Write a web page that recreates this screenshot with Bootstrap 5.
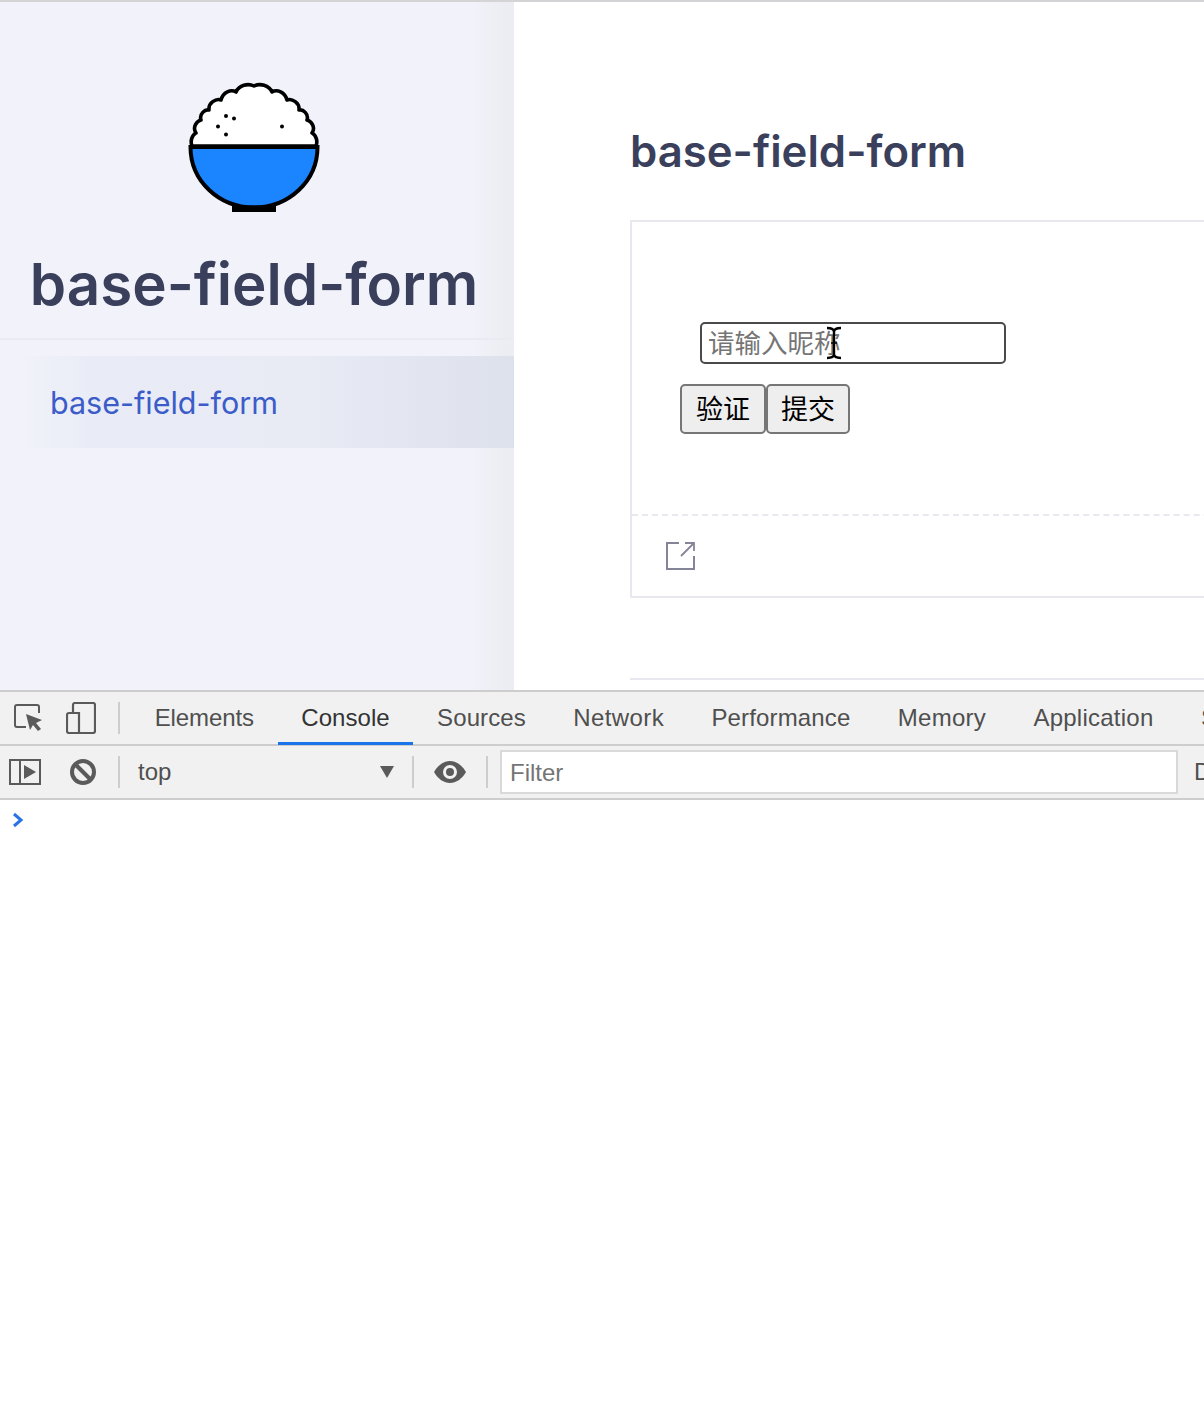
<!DOCTYPE html>
<html lang="zh">
<head>
<meta charset="utf-8">
<title>base-field-form</title>
<link href="https://cdn.jsdelivr.net/npm/bootstrap@5.3.0/dist/css/bootstrap.min.css" rel="stylesheet">
<style>
html,body{height:100%;overflow:hidden;background:#fff}
body{width:1204px;height:1406px;font-family:Inter,"Noto Sans CJK SC",sans-serif}
.page-top{height:690px;border-top:2px solid #d4d4d6}
.side-pane{width:514px;background:linear-gradient(90deg,#f1f2fa 0,#f1f2fa 92.500%,#eef0f6 95%,#ebedf3 99%,#eceef4 100%);color:#3a405c}
.side-head{height:338px;border-bottom:2px solid #e9ebf3;padding:80px 6px 0 0}
.side-title{font-size:58.3px;font-weight:600;line-height:72px;margin:36px 0 0}
.side-link{margin-top:16px;height:92px;padding:2px 0 0 50px;font-size:30.5px;color:#3b5cc9;background:linear-gradient(90deg,#f1f2fa 0,#f1f2fa 4%,#e9ecf6 18%,#e8ebf4 60%,#dde1ec 100%)}
.main-pane{padding:118px 0 0 116px;min-width:0}
.main-title{font-size:43.7px;font-weight:600;color:#3a405c;line-height:64px;margin:0 0 36px;white-space:nowrap}
.demo-box{width:700px;height:378px;border:2px solid #e8e8ee;border-right:0}
.demo-area{height:294px;padding:100px 0 0 48px;border-bottom:2px dashed #e8e8ee}
.demo-input{display:block;width:306px;height:42px;margin-left:20px;padding:0 6px 4px;border:2px solid #4a4a4a;border-radius:5px;font:26.500px "Noto Sans CJK SC",sans-serif;outline:0}
.demo-input::placeholder{color:#757575;opacity:1}
.demo-btns{margin-top:20px}
.demo-btn{width:86px;height:50px;padding:0 0 4px;background:#eee;border:2px solid #767676;border-radius:5px;font:27px "Noto Sans CJK SC",sans-serif;color:#000}
.demo-btn+.demo-btn{width:84px}
.demo-foot{padding:25px 0 0 34px}
.page-rule{width:700px;height:2px;background:#e8e8ee;margin-top:80px}
.ibeam{position:absolute;left:824px;top:326px;pointer-events:none}
.dev-font{font-family:"Liberation Sans",Arial,sans-serif;font-size:24px;color:#4f4f4f}
.dev-bar{background:#f1f1f1;border-top:2px solid #cdcdcd}
.dev-tabs{height:56px;padding-left:14px}
.dev-tools{height:54px;padding-left:9px}
.dev-sep{width:2px;height:32px;background:#cdcdcd;flex:none}
.dev-tab{padding:0 23.7px;height:54px;line-height:54px;flex:none;white-space:nowrap;letter-spacing:.25px}
.dev-tab-first{letter-spacing:-.1px}
.dev-tab-on{color:#333;border-bottom:3px solid #1a73e8;letter-spacing:.05px}
.dev-tab-src{letter-spacing:.1px}
.dev-tab-net{letter-spacing:.4px}
.dev-tab-perf{letter-spacing:.15px}
.dev-line{border-bottom:2px solid #cdcdcd}
.filter-box{width:678px;height:44px;background:#fff;border:2px solid #d9d9d9;padding-left:8px;line-height:42px;color:#757575;flex:none}
.ctx-select{width:292px;padding-left:18px;flex:none}
.console-pane{height:606px;padding:12px 0 0 12px}
.gap-device{margin-left:22px}
.gap-sep-a{margin-left:22px;margin-right:11px}
.gap-ban{margin-left:28px}
.gap-sep-b{margin-left:21px}
.gap-eye{margin-left:20px}
.gap-sep-c{margin-left:20px;margin-right:12px}
.gap-arrow{margin-right:18px}
.gap-end{margin-left:16px}
</style>
</head>
<body class="position-relative">
<div class="page-top d-flex overflow-hidden">
  <aside class="side-pane flex-shrink-0">
    <div class="side-head text-center">
      <svg width="132" height="130" viewBox="188 82 132 130" class="d-block mx-auto" aria-hidden="true">
        <path d="M192 146C190 141 192 135 196 133C192 127 197 121 201 120C199 114 205 109 209 110C208 103 216 98 221 100C223 92 231 89 236 92C239 85 248 83 254 86C260 83 269 85 272 92C277 89 285 92 287 100C292 98 300 103 299 110C303 109 309 114 307 120C311 121 316 127 312 133C316 135 318 141 316 146Z" fill="#fff" stroke="#000" stroke-width="3.6" stroke-linejoin="round"/>
        <path d="M190.500 147H317.500C317.500 181 289 207.500 254 207.500C219 207.500 190.500 181 190.500 147Z" fill="#1a85ff" stroke="#000" stroke-width="4"/>
        <rect x="232" y="205.500" width="44" height="6.500" fill="#000"/>
        <g fill="#000"><circle cx="226" cy="116" r="2"/><circle cx="234" cy="118.500" r="2"/><circle cx="218" cy="126.500" r="2"/><circle cx="226" cy="134.500" r="2"/><circle cx="282" cy="126.500" r="2"/></g>
      </svg>
      <h1 class="side-title">base-field-form</h1>
    </div>
    <div class="side-link d-flex align-items-center">base-field-form</div>
  </aside>
  <main class="main-pane flex-grow-1">
    <h2 class="main-title">base-field-form</h2>
    <div class="demo-box">
      <div class="demo-area">
        <input class="demo-input" type="text" placeholder="请输入昵称">
        <div class="demo-btns d-flex"><button class="demo-btn" type="button">验证</button><button class="demo-btn" type="button">提交</button></div>
      </div>
      <div class="demo-foot">
        <svg width="30" height="30" viewBox="0 0 30 30" class="d-block" fill="none" stroke="#858598" stroke-width="2" aria-hidden="true"><path d="M13 2H1V28H28V15"/><path d="M15 15L28 2M19 2H28V10" stroke-width="1.800"/></svg>
      </div>
    </div>
    <div class="page-rule"></div>
  </main>
</div>
<svg class="ibeam" width="20" height="34" viewBox="0 0 20 34" fill="none" stroke="#000" stroke-width="2.400" aria-hidden="true"><path d="M3 2C7 2 10 3 10 6V28C10 31 7 32 3 32M17 2C13 2 10 3 10 6M10 28C10 31 13 32 17 32"/><path d="M7 17H13" stroke-width="1.500"/></svg>
<section class="dev-font">
  <div class="dev-bar dev-tabs dev-line d-flex align-items-center">
    <svg width="30" height="32" viewBox="0 0 30 32" class="flex-shrink-0" aria-hidden="true"><path d="M12 25H3A2 2 0 0 1 1 23V5A2 2 0 0 1 3 3H23A2 2 0 0 1 25 5V11" fill="none" stroke="#5a5a5a" stroke-width="2"/><path d="M12 12L28 18L22 21L27 27L24 29L19 23L16 28Z" fill="#5a5a5a"/></svg>
    <svg width="30" height="32" viewBox="0 0 30 32" class="flex-shrink-0 gap-device" aria-hidden="true"><path d="M7 10V3A2 2 0 0 1 9 1H27A2 2 0 0 1 29 3V29A2 2 0 0 1 27 31H3A2 2 0 0 1 1 29V13A2 2 0 0 1 3 11H13V31" fill="none" stroke="#5a5a5a" stroke-width="2.200"/></svg>
    <span class="dev-sep gap-sep-a"></span>
    <span class="dev-tab dev-tab-first">Elements</span><span class="dev-tab dev-tab-on">Console</span><span class="dev-tab dev-tab-src">Sources</span><span class="dev-tab dev-tab-net">Network</span><span class="dev-tab dev-tab-perf">Performance</span><span class="dev-tab">Memory</span><span class="dev-tab">Application</span><span class="dev-tab">Security</span>
  </div>
  <div class="dev-bar dev-tools dev-line d-flex align-items-center border-top-0">
    <svg width="32" height="26" viewBox="0 0 32 26" class="flex-shrink-0" aria-hidden="true"><path d="M1 1H31V25H1ZM11 1V25" fill="none" stroke="#5a5a5a" stroke-width="2"/><path d="M15 6L27 13L15 20Z" fill="#5a5a5a"/></svg>
    <svg width="28" height="28" viewBox="0 0 28 28" class="flex-shrink-0 gap-ban" fill="none" stroke="#5a5a5a" stroke-width="4" aria-hidden="true"><circle cx="14" cy="14" r="11"/><path d="M6 6L22 22"/></svg>
    <span class="dev-sep gap-sep-b"></span>
    <span class="ctx-select d-flex align-items-center justify-content-between"><span>top</span><svg width="14" height="12" viewBox="0 0 14 12" class="gap-arrow" aria-hidden="true"><path d="M0 0H14L7 12Z" fill="#5a5a5a"/></svg></span>
    <span class="dev-sep"></span>
    <svg width="32" height="22" viewBox="0 0 32 22" class="flex-shrink-0 gap-eye" aria-hidden="true"><path fill-rule="evenodd" d="M0 11C4 4 10 0 16 0S28 4 32 11C28 18 22 22 16 22S4 18 0 11ZM16 4A7 7 0 1 0 16 18A7 7 0 1 0 16 4ZM16 7A4 4 0 1 1 16 15A4 4 0 1 1 16 7Z" fill="#5a5a5a"/></svg>
    <span class="dev-sep gap-sep-c"></span>
    <span class="filter-box">Filter</span>
    <span class="flex-shrink-0 gap-end">Default</span>
  </div>
  <div class="console-pane"><svg width="12" height="16" viewBox="0 0 12 16" class="d-block" aria-hidden="true"><path d="M2 2L9 8L2 14" fill="none" stroke="#2a73e6" stroke-width="3"/></svg></div>
</section>
</body>
</html>
